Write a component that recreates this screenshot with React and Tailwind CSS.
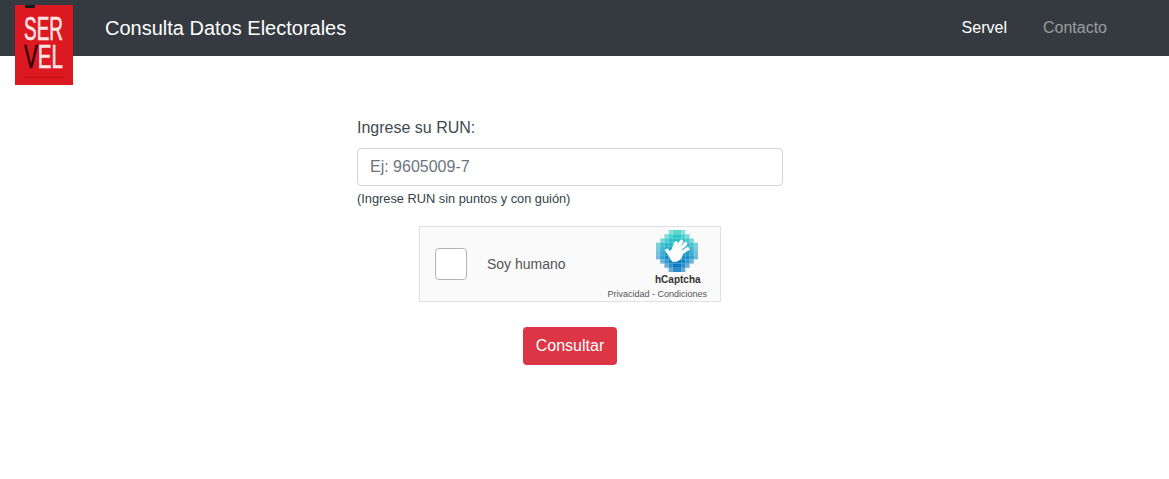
const widths = [4,6,8,10,10,10,10,8,6,4];
const rowColors = ["#3fd0c4","#2dc8c4","#28bfc6","#26b6c8","#22aac8","#1c9dc8","#148fc6","#0f84c4","#0a7bc0","#0574bf"];
function HCaptcha(){
  return (
    <svg width="44" height="44" viewBox="0 0 44 44" className="block">
      {widths.map((w,y)=>{
        const start=(10-w)/2;
        return Array.from({length:w},(_,i)=>{
          const edge=Math.min(i,w-1-i);
          const op=edge===0?0.6:edge===1?0.85:1;
          return <rect key={y+"-"+i} x={1+(start+i)*4.2} y={1+y*4.2} width="4.2" height="4.2" fill={rowColors[y]} opacity={op}/>;
        });
      })}
      <g stroke="#fff" strokeWidth="3.6" strokeLinecap="round" fill="none">
        <path d="M16 27 L12 21.5"/>
        <path d="M18 22 L21 14"/>
        <path d="M20.5 21 L26.5 12.5"/>
        <path d="M23 22 L30.5 15"/>
        <path d="M24.5 25 L32.5 20"/>
      </g>
      <path d="M13.5 24 C15 19 24 18 28 23 C28.5 28 24.5 33 19.5 33 C16 33 14.5 29 13.5 24 Z" fill="#fff"/>
    </svg>
  );
}
function Logo(){
  return (
    <svg width="58" height="80" viewBox="0 0 58 80" className="block" style={{fontFamily:'"Liberation Sans",sans-serif'}}>
      <rect width="58" height="80" fill="#dc1820"/>
      <rect x="10" y="0" width="10" height="3" fill="#1a1a1a"/>
      <text x="9" y="35" fontSize="33" fill="#fde4e4" stroke="#fde4e4" strokeWidth="0.6" textLength="39" lengthAdjust="spacingAndGlyphs">SER</text>
      <text x="9" y="63" fontSize="33" fill="#fde4e4" stroke="#fde4e4" strokeWidth="0.6" textLength="39" lengthAdjust="spacingAndGlyphs"><tspan fill="#2d0306" stroke="#2d0306">V</tspan>EL</text>
      <rect x="9" y="72" width="40" height="0.6" fill="#a00a12"/>
    </svg>
  );
}
export default function App(){
  return (
    <div className="min-h-[479px] bg-white font-['Liberation_Sans',Arial,sans-serif] text-[#212529]">
      <nav className="relative h-14 bg-[#343a40] flex items-center pl-[105px] pr-[62px]">
        <div className="absolute left-[15px] top-[5px]"><Logo/></div>
        <span className="text-xl text-white">Consulta Datos Electorales</span>
        <div className="ml-auto flex gap-9 text-base">
          <span className="text-white">Servel</span>
          <span className="text-white/50">Contacto</span>
        </div>
      </nav>
      <main className="w-[426px] ml-[357px] pt-[60px]">
        <label className="block text-base text-[#3f4a50] leading-6">Ingrese su RUN:</label>
        <input placeholder="Ej: 9605009-7" className="block mt-2 w-full h-[38px] px-3 border border-[#ced4da] rounded text-base placeholder:text-[#6c757d] outline-none"/>
        <p className="mt-1 text-[12.8px] leading-[18px] text-[#343f46]">(Ingrese RUN sin puntos y con guión)</p>
        <div className="mt-[18px] ml-[62px] w-[302px] h-[76px] border border-[#e0e0e0] bg-[#fafafa] flex items-center relative">
          <div className="ml-[15px] w-8 h-8 bg-white border border-[#b5b5b5] rounded"></div>
          <span className="ml-5 text-sm text-[#555]">Soy humano</span>
          <div className="absolute left-[235px] top-[2px]"><HCaptcha/></div>
          <div className="absolute left-[235px] top-[47px] text-[10px] font-bold leading-3 text-[#333]">hCaptcha</div>
          <div className="absolute right-[13px] top-[61px] text-[9px] leading-3 text-[#555] whitespace-nowrap">Privacidad - Condiciones</div>
        </div>
        <button className="block mt-[25px] ml-[166px] w-[94px] h-[38px] bg-[#dc3545] text-white text-base rounded">Consultar</button>
      </main>
    </div>
  );
}
